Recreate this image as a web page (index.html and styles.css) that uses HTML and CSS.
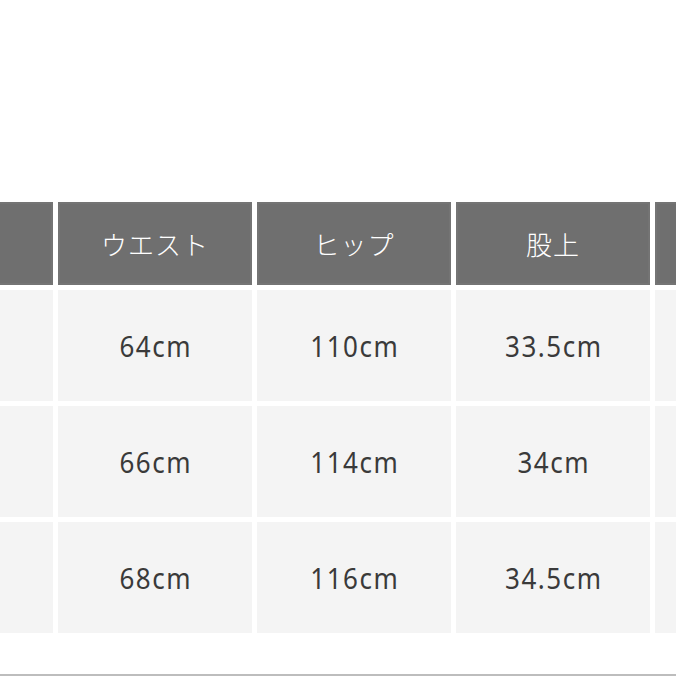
FILE: index.html
```html
<!DOCTYPE html>
<html lang="ja">
<head>
<meta charset="utf-8">
<link rel="stylesheet" href="styles.css">
</head>
<body>
<div class="page">
  <div class="table">
    <div class="row head">
      <div class="cell"></div>
      <div class="cell">ウエスト</div>
      <div class="cell">ヒップ</div>
      <div class="cell">股上</div>
      <div class="cell"></div>
    </div>
    <div class="row body">
      <div class="cell"></div>
      <div class="cell"><span>64cm</span></div>
      <div class="cell"><span>110cm</span></div>
      <div class="cell"><span>33.5cm</span></div>
      <div class="cell"></div>
    </div>
    <div class="row body">
      <div class="cell"></div>
      <div class="cell"><span>66cm</span></div>
      <div class="cell"><span>114cm</span></div>
      <div class="cell"><span>34cm</span></div>
      <div class="cell"></div>
    </div>
    <div class="row body">
      <div class="cell"></div>
      <div class="cell"><span>68cm</span></div>
      <div class="cell"><span>116cm</span></div>
      <div class="cell"><span>34.5cm</span></div>
      <div class="cell"></div>
    </div>
  </div>
  <div class="rule"></div>
</div>
</body>
</html>
```

FILE: styles.css
```css
html, body {
  margin: 0;
  padding: 0;
  background: #ffffff;
}
body {
  width: 676px;
  height: 676px;
  overflow: hidden;
  font-family: "Noto Sans CJK JP", "Noto Sans", sans-serif;
}
.page {
  padding-top: 202px;
}
.table {
  display: flex;
  flex-direction: column;
  gap: 5px;
  margin-left: -141px;
  width: 1000px;
}
.row {
  display: flex;
  gap: 5px;
}
.cell {
  flex: 0 0 194px;
  display: flex;
  align-items: center;
  justify-content: center;
}
.head .cell {
  height: 83px;
  background: #6f6f6f;
  box-shadow: inset 0 0 0 2px #747474;
  color: #ffffff;
  font-size: 26px;
  font-weight: 300;
  letter-spacing: 1px;
}
.body .cell {
  height: 111px;
  background: #f4f4f4;
  color: #3a3a3a;
  font-family: "Noto Sans", "Noto Sans CJK JP", sans-serif;
  font-size: 26px;
  font-weight: 400;
  letter-spacing: 1.5px;
}
.body .cell span {
  display: inline-block;
  margin-left: 1.5px;
  transform: scaleY(1.12);
}
.rule {
  margin-top: 41px;
  height: 2px;
  background: #bdbdbd;
}
```
